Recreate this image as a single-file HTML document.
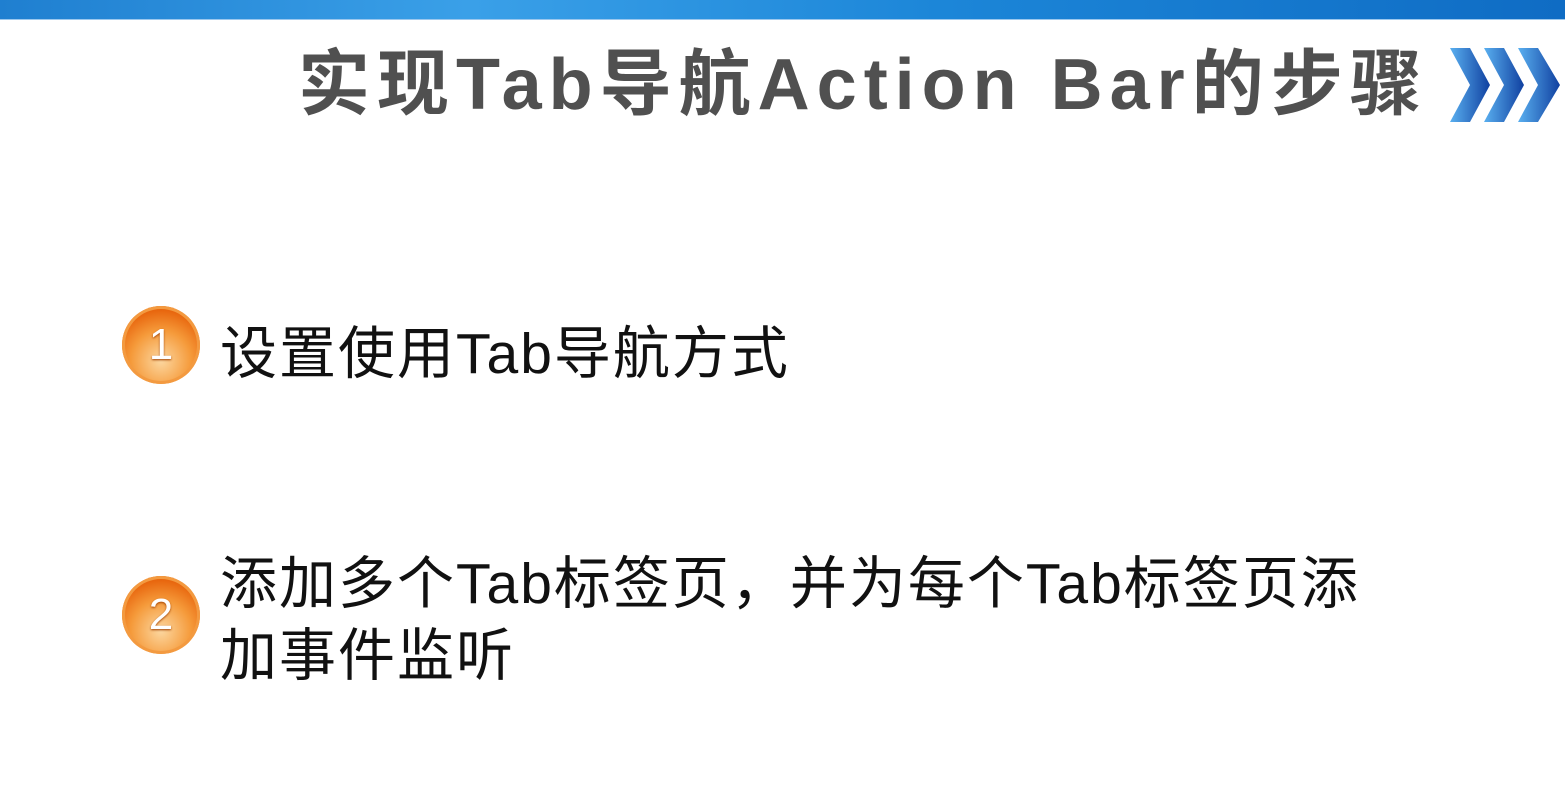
<!DOCTYPE html>
<html><head><meta charset="utf-8"><style>
html,body{margin:0;padding:0;width:1565px;height:802px;overflow:hidden;background:#fff;position:relative;font-family:"Liberation Sans","Noto Sans CJK SC",sans-serif}
.top{position:absolute;left:0;top:0;width:1565px;height:19px;background:linear-gradient(90deg,#1f7fd0,#3aa0e8 30%,#1c86d8 60%,#0f6cc4);border-bottom:1px solid #9cc8ee}
.title{position:absolute;left:298px;top:40px;font-size:72px;font-weight:bold;color:#505050;letter-spacing:7px;white-space:nowrap;line-height:90px;font-family:"Liberation Sans","Noto Sans CJK SC",sans-serif}
.txt{position:absolute;left:220px;font-size:57px;color:#111;line-height:72px;white-space:nowrap;letter-spacing:2px}
.c{position:absolute;width:78px;height:78px;border-radius:50%;background:radial-gradient(circle at 50% 70%,#fcd7a0 0%,#f59a3a 45%,#e8660e 75%,#f07a1a 100%);box-shadow:0 0 0 3px #f39a40 inset;color:#fff;font-size:44px;text-align:center;line-height:78px;text-shadow:0 1px 2px #a04000}
</style></head><body>
<div class="top"></div>
<div class="title">实现Tab导航Action Bar的步骤</div>
<svg style="position:absolute;left:1448px;top:46px" width="117" height="78" viewBox="0 0 117 78">
<defs><linearGradient id="g" x1="0" x2="1"><stop offset="0" stop-color="#5ab0f0"/><stop offset="1" stop-color="#1040a0"/></linearGradient></defs>
<polygon points="2,2 22,2 42,39 22,76 2,76 22,39" fill="url(#g)"/>
<polygon points="36,2 56,2 76,39 56,76 36,76 56,39" fill="url(#g)"/>
<polygon points="70,2 90,2 112,39 90,76 70,76 90,39" fill="url(#g)"/>
</svg>
<div class="c" style="left:122px;top:306px">1</div>
<div class="txt" style="top:318px">设置使用Tab导航方式</div>
<div class="c" style="left:122px;top:576px">2</div>
<div class="txt" style="top:548px">添加多个Tab标签页，并为每个Tab标签页添</div>
<div class="txt" style="top:620px">加事件监听</div>
</body></html>
